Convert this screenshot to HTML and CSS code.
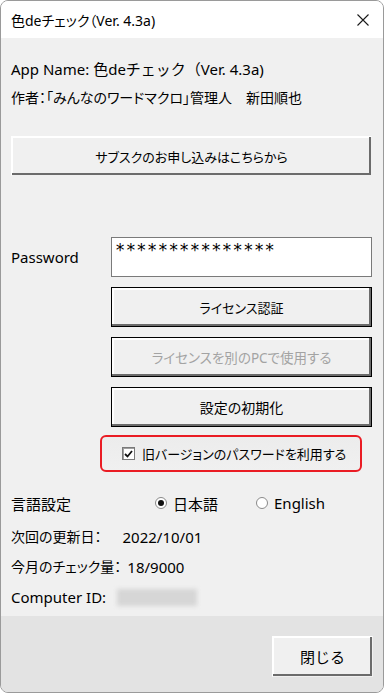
FILE: index.html
```html
<!DOCTYPE html>
<html lang="ja">
<head>
<meta charset="utf-8">
<title>色deチェック</title>
<link rel="stylesheet" href="styles.css">
</head>
<body>
<div class="window">
  <div class="titlebar">
    <span class="title">色deチェック（Ver. 4.3a)</span>
    <svg class="close" width="12" height="12" viewBox="0 0 12 12"><path d="M0.5 0.5 L11.5 11.5 M11.5 0.5 L0.5 11.5" stroke="#1a1a1a" stroke-width="1.1" fill="none"/></svg>
  </div>
  <div class="content">
    <p class="line app">App Name: 色deチェック（Ver. 4.3a)</p>
    <p class="line author">作者：「みんなのワードマクロ」管理人　新田順也</p>
    <button class="btn wide">サブスクのお申し込みはこちらから</button>

    <div class="form">
      <label class="label">Password</label>
      <div class="input">***************</div>
      <span></span><button class="btn def small">ライセンス認証</button>
      <span></span><button class="btn def disabled">ライセンスを別のPCで使用する</button>
      <span></span><button class="btn def">設定の初期化</button>
    </div>

    <div class="highlight">
      <span class="check"><svg width="9" height="8" viewBox="0 0 9 8"><path d="M1 4 L3.5 6.5 L8 1" stroke="#111" stroke-width="1.8" fill="none"/></svg></span>
      <span>旧バージョンのパスワードを利用する</span>
    </div>

    <div class="lang">
      <span class="lang-label">言語設定</span>
      <span class="radio-item"><span class="radio on"></span>日本語</span>
      <span class="radio-item en"><span class="radio"></span>English</span>
    </div>
    <p class="info first"><span class="key">次回の更新日：</span><span class="val date">2022/10/01</span></p>
    <p class="info"><span class="key">今月のチェック量：</span><span class="val count">18/9000</span></p>
    <p class="info"><span>Computer ID:</span><span class="blur"></span></p>
  </div>
  <div class="footer">
    <button class="btn closebtn">閉じる</button>
  </div>
</div>
</body>
</html>
```
FILE: styles.css
```css
* { box-sizing: border-box; }
html, body { margin: 0; padding: 0; background: #ffffff; }
body {
  font-family: "Noto Sans", "Noto Sans CJK JP", sans-serif;
  font-feature-settings: "palt";
  color: #000;
}
.window {
  width: 384px;
  height: 693px;
  border: 1px solid #9a9a9a;
  border-radius: 8px;
  overflow: hidden;
  display: flex;
  flex-direction: column;
  background: #f0f0f0;
}
.titlebar {
  height: 37px;
  background: #fff;
  display: flex;
  align-items: center;
  justify-content: space-between;
  padding: 0 14px 0 10px;
  flex: none;
}
.title { font-size: 14px; }
.close { display: block; }
.content {
  flex: 1;
  padding: 21px 11px 0 10px;
}
.line { margin: 0; font-size: 15px; line-height: 20px; white-space: nowrap; }
.app { font-feature-settings: normal; }
.author { margin-top: 9px; font-size: 14px; }
.btn {
  font-family: inherit;
  font-feature-settings: "palt";
  font-size: 14px;
  color: #000;
  background: #f0f0f0;
  height: 40px;
  border: 1px solid transparent;
  border-top-color: #fff;
  border-left-color: #fff;
  box-shadow: inset -2px -2px 0 #6b6b6b, inset 1px 1px 0 #fff;
  padding: 0;
  border-radius: 0;
  white-space: nowrap;
}
.btn.wide { width: 100%; margin-top: 28px; display: block; font-size: 13px; }
.btn.def { border: 1px solid #000; box-shadow: inset -2px -2px 0 #6b6b6b, inset 2px 2px 0 #fff; }
.btn.small { font-size: 13px; }
.btn.disabled { color: #a3a3a3; font-size: 13.5px; }
.form {
  display: grid;
  grid-template-columns: 100px 1fr;
  row-gap: 10px;
  margin-top: 61px;
  align-items: center;
}
.label { font-size: 15px; }
.input {
  height: 40px;
  background: #fff;
  border: 1px solid #7a7a7a;
  font-family: "DejaVu Sans Mono", monospace;
  font-size: 17px;
  line-height: 14px;
  padding: 5px 0 0 3px;
  letter-spacing: 0.45px;
}
.highlight {
  margin: 8px 10px 0 89px;
  height: 37px;
  border: 2px solid #ea1c24;
  border-radius: 6px;
  display: flex;
  align-items: center;
  gap: 7px;
  padding-left: 20px;
  font-size: 13px;
  white-space: nowrap;
  background: linear-gradient(#ececec, #f0f0f0);
}
.check {
  width: 13px; height: 13px;
  background: #fff;
  border: 1px solid #7a7a7a;
  box-shadow: inset 1px 1px 0 #a0a0a0;
  display: flex;
  align-items: center;
  justify-content: center;
  flex: none;
}
.check svg { display: block; }
.lang {
  display: flex;
  align-items: center;
  margin-top: 20px;
  height: 22px;
  font-size: 15px;
}
.lang-label { width: 144px; }
.radio-item { display: flex; align-items: center; gap: 6px; }
.radio-item.en { margin-left: 38px; }
.radio {
  width: 12px; height: 12px;
  border-radius: 50%;
  background: #fff;
  border: 1px solid #8a8a8a;
  position: relative;
}
.radio.on::after {
  content: "";
  position: absolute;
  left: 2px; top: 2px;
  width: 6px; height: 6px;
  border-radius: 50%;
  background: #111;
}
.info {
  margin: 8px 0 0;
  font-size: 15px;
  line-height: 22px;
  display: flex;
  align-items: center;
}
.info.first { margin-top: 12px; }
.key { font-size: 14px; }
.val.date { margin-left: 21px; }
.val.count { margin-left: 6px; }
.blur {
  display: inline-block;
  width: 80px;
  height: 17px;
  margin-left: 11px;
  background: #d6d6d6;
  filter: blur(2px);
}
.footer {
  flex: none;
  height: 76px;
  background: #e3e3e3;
  display: flex;
  justify-content: flex-end;
  align-items: flex-start;
  padding: 20px 10px 0 0;
}
.btn.closebtn { width: 101px; height: 41px; font-size: 15px; font-feature-settings: normal; }
```
